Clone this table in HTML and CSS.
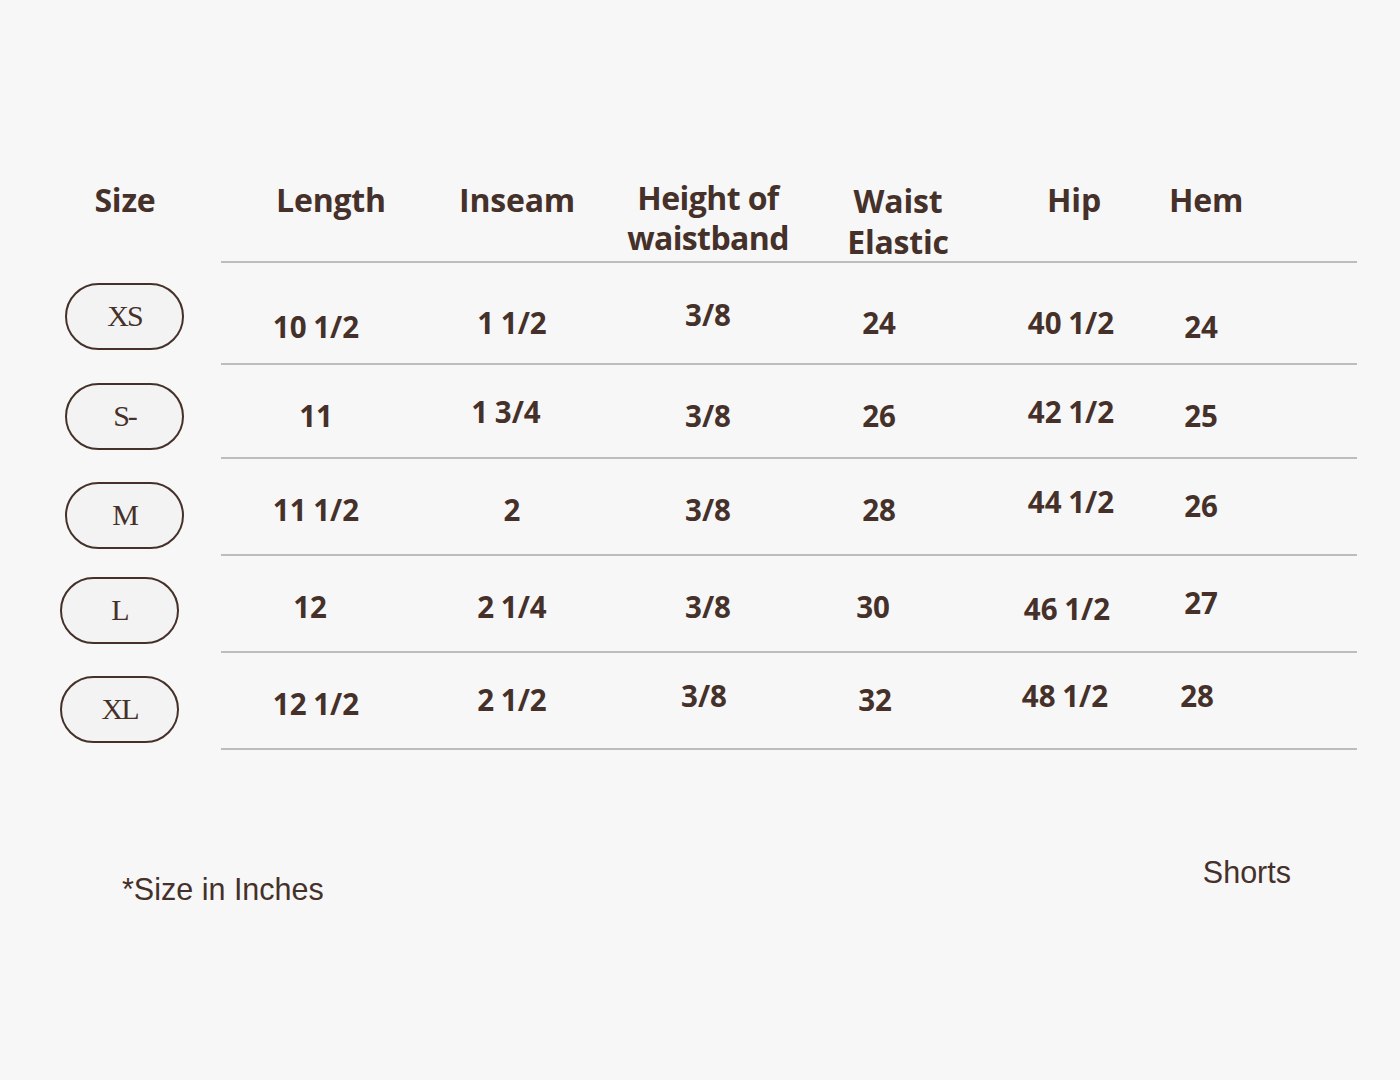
FILE: index.html
```html
<!DOCTYPE html>
<html lang="en">
<head>
<meta charset="utf-8">
<title>Shorts size chart</title>
<link rel="stylesheet" href="styles.css">
</head>
<body>
<main class="chart">
  <div class="row head">
    <div class="size-cell"><span class="size-title">Size</span></div>
    <div class="cells">
      <div class="cell h-length">Length</div>
      <div class="cell h-inseam">Inseam</div>
      <div class="cell h-height two">Height of<br>waistband</div>
      <div class="cell h-waist two wide">Waist<br>Elastic</div>
      <div class="cell h-hip">Hip</div>
      <div class="cell h-hem">Hem</div>
    </div>
  </div>

  <div class="row r1">
    <div class="size-cell"><span class="pill">XS</span></div>
    <div class="cells">
      <div class="cell dn4">10 1/2</div>
      <div class="cell">1 1/2</div>
      <div class="cell up8">3/8</div>
      <div class="cell">24</div>
      <div class="cell">40 1/2</div>
      <div class="cell dn4">24</div>
    </div>
  </div>

  <div class="row r2">
    <div class="size-cell"><span class="pill">S-</span></div>
    <div class="cells">
      <div class="cell">11</div>
      <div class="cell up4 sl6">1 3/4</div>
      <div class="cell">3/8</div>
      <div class="cell">26</div>
      <div class="cell up4">42 1/2</div>
      <div class="cell">25</div>
    </div>
  </div>

  <div class="row r3">
    <div class="size-cell"><span class="pill">M</span></div>
    <div class="cells">
      <div class="cell">11 1/2</div>
      <div class="cell">2</div>
      <div class="cell">3/8</div>
      <div class="cell">28</div>
      <div class="cell up8">44 1/2</div>
      <div class="cell up4">26</div>
    </div>
  </div>

  <div class="row r4">
    <div class="size-cell"><span class="pill shift">L</span></div>
    <div class="cells">
      <div class="cell sl6">12</div>
      <div class="cell">2 1/4</div>
      <div class="cell">3/8</div>
      <div class="cell sl6">30</div>
      <div class="cell dn2 sl4">46 1/2</div>
      <div class="cell up4">27</div>
    </div>
  </div>

  <div class="row r5">
    <div class="size-cell"><span class="pill shift">XL</span></div>
    <div class="cells">
      <div class="cell dn4">12 1/2</div>
      <div class="cell">2 1/2</div>
      <div class="cell up4 sl4">3/8</div>
      <div class="cell sl4">32</div>
      <div class="cell up4 sl6">48 1/2</div>
      <div class="cell up4 sl4">28</div>
    </div>
  </div>

  <footer class="notes">
    <span class="note">*Size in Inches</span>
    <span class="product">Shorts</span>
  </footer>
</main>
</body>
</html>
```

FILE: styles.css
```css
* {
  box-sizing: border-box;
}

html, body {
  margin: 0;
  padding: 0;
  background: #f7f7f7;
}

body {
  width: 1400px;
  height: 1080px;
  overflow: hidden;
  color: #45312a;
  font-family: "Open Sans", "Noto Sans", sans-serif;
}

.chart {
  display: flex;
  flex-direction: column;
}

.row {
  display: flex;
}

.size-cell {
  width: 221px;
  flex: none;
  padding-left: 65px;
  padding-top: 22px;
}

.cells {
  width: 1136px;
  flex: none;
  display: grid;
  grid-template-columns: 190px 202px 190px 152px 232px 28px 1fr;
  align-items: start;
  padding-top: 31px;
  border-bottom: 2px solid #bdbdbd;
}

.cell {
  display: flex;
  justify-content: center;
  white-space: nowrap;
  font-weight: 700;
  font-size: 29.5px;
  line-height: 40px;
  letter-spacing: 0;
  word-spacing: -1px;
}

/* header */
.head .cells {
  height: 263px;
  padding-top: 180px;
}

.head .size-cell {
  padding-top: 180px;
  padding-left: 0;
  display: flex;
  justify-content: center;
}

.size-title,
.head .cell {
  font-weight: 700;
  font-size: 32px;
  line-height: 40px;
  letter-spacing: -0.2px;
  word-spacing: 0;
}

.size-title {
  padding-left: 29px;
}

.head .cell.two {
  text-align: center;
  margin-top: -2px;
}

.head .h-height {
  letter-spacing: -0.6px;
}

.head .cell.wide {
  line-height: 41px;
  margin-top: 0;
}

.h-length { padding-left: 30px; }
.h-inseam { padding-left: 10px; }
.h-waist { padding-left: 38px; }
.h-hip { padding-left: 6px; }
.h-hem { padding-left: 10px; }

/* rows */
.r1 .cells { height: 102px; padding-top: 40px; }
.r2 .cells { height: 94px; }
.r3 .cells,
.r4 .cells,
.r5 .cells { height: 97px; }
.r5 .cells { padding-top: 27px; }

.r1 .size-cell { padding-top: 20px; }
.r2 .size-cell { padding-top: 18px; }
.r3 .size-cell { padding-top: 23px; }
.r4 .size-cell { padding-top: 21px; }
.r5 .size-cell { padding-top: 23px; }

.up8 { margin-top: -8px; }
.up4 { margin-top: -4px; }
.dn4 { margin-top: 4px; }
.dn2 { margin-top: 2px; }
.sl4 { padding-right: 8px; }
.sl6 { padding-right: 12px; }

/* size pills */
.pill {
  display: flex;
  align-items: center;
  justify-content: center;
  width: 119px;
  height: 67px;
  border: 2px solid #45312a;
  border-radius: 34px;
  background: #f3f3f3;
  font-family: "Liberation Serif", "Times New Roman", serif;
  font-size: 30px;
  letter-spacing: -2px;
  color: #45312a;
  padding-bottom: 2px;
}

.pill.shift {
  margin-left: -5px;
}

/* footer */
.notes {
  display: flex;
  justify-content: space-between;
  align-items: flex-start;
  margin-top: 104px;
  padding: 0 109px 0 122px;
  font-family: "Liberation Sans", Arial, sans-serif;
  font-size: 30.5px;
  line-height: 36px;
}

.note {
  margin-top: 17px;
}
```
